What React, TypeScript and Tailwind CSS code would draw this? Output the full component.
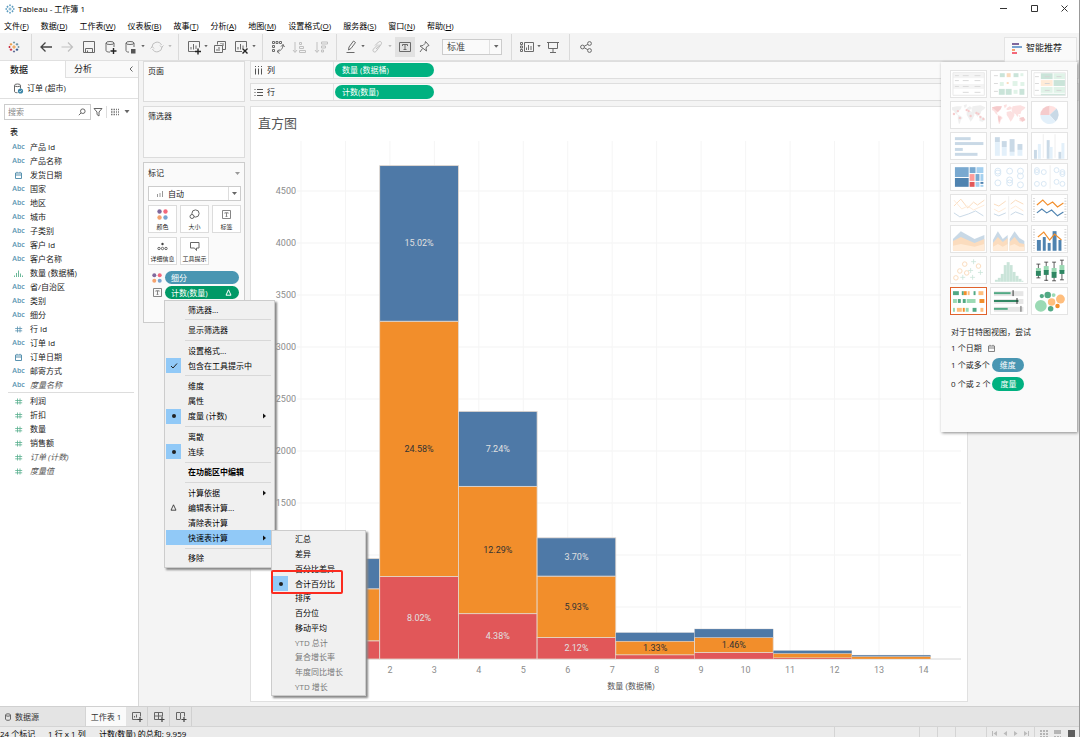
import type { ReactNode } from 'react'
import clsx from 'clsx'

const BLUE = '#4e79a7'
const ORANGE = '#f28e2b'
const RED = '#e15759'

const menus = [
  ['文件', 'F'], ['数据', 'D'], ['工作表', 'W'], ['仪表板', 'B'], ['故事', 'T'], ['分析', 'A'],
  ['地图', 'M'], ['设置格式', 'O'], ['服务器', 'S'], ['窗口', 'N'], ['帮助', 'H'],
]

type FieldKind = 'abc' | 'date' | 'bin' | 'num' | 'measure'

interface Field {
  name: string
  kind: FieldKind
  italic?: boolean
}

const dimensions: Field[] = [
  { name: '产品 Id', kind: 'abc' },
  { name: '产品名称', kind: 'abc' },
  { name: '发货日期', kind: 'date' },
  { name: '国家', kind: 'abc' },
  { name: '地区', kind: 'abc' },
  { name: '城市', kind: 'abc' },
  { name: '子类别', kind: 'abc' },
  { name: '客户 Id', kind: 'abc' },
  { name: '客户名称', kind: 'abc' },
  { name: '数量 (数据桶)', kind: 'bin' },
  { name: '省/自治区', kind: 'abc' },
  { name: '类别', kind: 'abc' },
  { name: '细分', kind: 'abc' },
  { name: '行 Id', kind: 'num' },
  { name: '订单 Id', kind: 'abc' },
  { name: '订单日期', kind: 'date' },
  { name: '邮寄方式', kind: 'abc' },
  { name: '度量名称', kind: 'abc', italic: true },
]

const measures: Field[] = [
  { name: '利润', kind: 'measure' },
  { name: '折扣', kind: 'measure' },
  { name: '数量', kind: 'measure' },
  { name: '销售额', kind: 'measure' },
  { name: '订单 (计数)', kind: 'measure', italic: true },
  { name: '度量值', kind: 'measure', italic: true },
]

interface MenuEntry {
  label: string
  mark?: 'check' | 'dot' | 'delta'
  arrow?: boolean
  bold?: boolean
  active?: boolean
  disabled?: boolean
}

const contextSections: MenuEntry[][] = [
  [{ label: '筛选器...' }],
  [{ label: '显示筛选器' }],
  [{ label: '设置格式...' }, { label: '包含在工具提示中', mark: 'check' }],
  [{ label: '维度' }, { label: '属性' }, { label: '度量 (计数)', mark: 'dot', arrow: true }],
  [{ label: '离散' }, { label: '连续', mark: 'dot' }],
  [{ label: '在功能区中编辑', bold: true }],
  [
    { label: '计算依据', arrow: true },
    { label: '编辑表计算...', mark: 'delta' },
    { label: '清除表计算' },
    { label: '快速表计算', arrow: true, active: true },
  ],
  [{ label: '移除' }],
]

const quickCalcs: MenuEntry[] = [
  { label: '汇总' },
  { label: '差异' },
  { label: '百分比差异' },
  { label: '合计百分比', mark: 'dot' },
  { label: '排序' },
  { label: '百分位' },
  { label: '移动平均' },
  { label: 'YTD 总计', disabled: true },
  { label: '复合增长率', disabled: true },
  { label: '年度同比增长', disabled: true },
  { label: 'YTD 增长', disabled: true },
]

// record counts per bin, stacked from the axis up
const bins = [
  { counts: [175, 500, 290], labels: ['', '', ''] },
  { counts: [793, 2455, 1496], labels: ['8.02%', '24.58%', '15.02%'] },
  { counts: [436, 1224, 721], labels: ['4.38%', '12.29%', '7.24%'] },
  { counts: [206, 591, 368], labels: ['2.12%', '5.93%', '3.70%'] },
  { counts: [40, 132, 82], labels: ['', '1.33%', ''] },
  { counts: [62, 145, 82], labels: ['', '1.46%', ''] },
  { counts: [12, 42, 28], labels: ['', '', ''] },
  { counts: [0, 24, 14], labels: ['', '', ''] },
]

function Icon({ size = 16, children, color = '#666', label }: { size?: number; children: ReactNode; color?: string; label?: string }) {
  return (
    <svg width={size} height={size} viewBox={`0 0 ${size} ${size}`} fill="none" stroke={color} aria-label={label} aria-hidden={!label} className="shrink-0">
      {children}
    </svg>
  )
}

function TableauMark({ size, tinted }: { size: number; tinted?: boolean }) {
  const plus = (x: number, y: number, r: number, c: string) => (
    <path key={`${x}-${y}`} d={`M${x - r} ${y}h${r * 2}M${x} ${y - r}v${r * 2}`} stroke={tinted ? '#4a90b8' : c} />
  )
  return (
    <svg width={size} height={size} viewBox="0 0 16 16" strokeWidth="1.2" aria-hidden="true">
      {plus(8, 8, 2.4, '#eb912c')}
      {plus(4, 4.4, 1.7, '#eb912c')}
      {plus(12, 4.4, 1.7, '#5b879b')}
      {plus(4, 11.6, 1.7, '#c72035')}
      {plus(12, 11.6, 1.7, '#1f447e')}
      {plus(8, 2, 1.4, '#7099a6')}
      {plus(8, 14, 1.4, '#5c6692')}
      {plus(2, 8, 1.4, '#c72035')}
      {plus(14, 8, 1.4, '#7099a6')}
    </svg>
  )
}

function Caret({ faded }: { faded?: boolean }) {
  return (
    <button aria-label="更多" className="flex w-[6px] items-center justify-center">
      <svg width="4" height="3" viewBox="0 0 4 3" aria-hidden="true">
        <path d="M.3 0h3.400L2 2.300z" fill={faded ? '#bbb' : '#666'} />
      </svg>
    </button>
  )
}

function Separator({ tight }: { tight?: boolean }) {
  return <div className={clsx('h-[26px] w-px shrink-0 bg-[#dadada]', tight ? 'mx-[3px]' : 'mx-[5px]')} />
}

function Tool({ label, width = 'w-[21px]', faded, active, children }: { label: string; width?: string; faded?: boolean; active?: boolean; children: ReactNode }) {
  return (
    <button aria-label={label} className={clsx('flex h-5 shrink-0 items-center justify-center', width, active && 'bg-[#e2e2e2]')}>
      <Icon color={faded ? '#c0c0c0' : '#6a6a6a'}>{children}</Icon>
    </button>
  )
}

function Toolbar() {
  return (
    <div className="flex h-7 shrink-0 items-center border-b border-[#e0e0e0] bg-[#f4f4f4]">
      <button aria-label="起始页" className="flex w-7 justify-center">
        <TableauMark size={12} />
      </button>
      <Separator tight />
      <Tool label="撤消"><path d="M3 8h11M7.500 3.500L3 8l4.500 4.500" strokeWidth="1.300" stroke="#444" /></Tool>
      <Tool label="重做" width="w-[22px]" faded><path d="M2.500 8H13M9 3.500L13.500 8 9 12.500" strokeWidth="1.200" /></Tool>
      <Tool label="保存"><path d="M2.500 2.500h11v11h-11zM4.500 13V9.500h7V13M6.500 11.500V13" /></Tool>
      <Tool label="新建数据源">
        <path d="M4 4v7.500c0 1 1.500 1.600 4 1.600M12 4v4" />
        <ellipse cx="8" cy="4" rx="4" ry="1.500" />
        <path d="M11.500 9v6M8.500 12h6" stroke="#222" strokeWidth="1.400" />
      </Tool>
      <Tool label="暂停自动更新" width="w-5">
        <path d="M4 4v7.500c0 1 1 1.600 3 1.600M12 4v4" />
        <ellipse cx="8" cy="4" rx="4" ry="1.500" />
        <path d="M9 10h4.500v4.500H9z" fill="#555" stroke="none" />
      </Tool>
      <Caret />
      <Tool label="运行更新" faded>
        <path d="M3 8a5 5 0 0 1 9.500-2M13 8a5 5 0 0 1-9.500 2M14.500 6.500l-1.800 1.800L11 6.500M1.500 9.500L3.300 7.700 5 9.500" />
      </Tool>
      <Caret faded />
      <Separator />
      <Tool label="新建工作表" width="w-[19px]">
        <path d="M9 12.500H2.500v-10h11v6M5 10.500V8M7.500 10.500V5M10 10V6.500" />
        <path d="M12 9.500v6M9 12.500h6" stroke="#222" strokeWidth="1.400" />
      </Tool>
      <Caret />
      <Tool label="复制工作表">
        <path d="M5.500 5.500v-3h8v8h-3M2.500 6.500h8v7h-8zM5 12v-2M7 12V8M9 5V4M11 7V4" />
      </Tool>
      <Tool label="清除工作表">
        <path d="M9 12.500H2.500v-10h11v6M5 10.500V8M7.500 10.500V5M10 9V6.500" />
        <path d="M9.500 9.500l5 5M14.500 9.500l-5 5" stroke="#222" strokeWidth="1.400" />
      </Tool>
      <Caret />
      <Separator />
      <Tool label="交换行和列" width="w-5">
        <path d="M2.500 2.500h2v2h-2zM6 2.500h2v2H6zM9.500 2.500h2v2h-2zM2.500 6.500h2v2h-2zM2.500 10.500h2v2h-2zM13 5.500c0 4-2 6.500-6 7M9.500 10.500l-2.500 2 2.500 2M11 7.500l2-2 1.500 2.500" />
      </Tool>
      <Tool label="升序排序" width="w-[22px]" faded>
        <path d="M4 3v10M2 11l2 2.500L6 11M8.500 3.500h2v2h-2zM8.500 7.500h4v2h-4zM8.500 11.500h6v2h-6z" />
      </Tool>
      <Tool label="降序排序" faded>
        <path d="M4 3v10M2 11l2 2.500L6 11M8.500 3h6v2h-6zM8.500 7h4v2h-4zM8.500 11h2v2h-2z" />
      </Tool>
      <Separator />
      <Tool label="突出显示" width="w-[18px]">
        <path d="M5.500 11l.5-3 4.500-6 2 1.500L8 9.500 5.500 11zM3.500 13.500h8" />
      </Tool>
      <Caret />
      <Tool label="组成员" faded>
        <path d="M6 6.500l3.500-3.500c2-1.500 4 .5 2.500 2.500L7 12.500c-2 1.500-4-.5-2.500-2.500L9 5.500M7 10l4-4.500" />
      </Tool>
      <Caret faded />
      <div className="w-[2px]" />
      <Tool label="显示标记标签" width="w-5" active>
        <path d="M2.500 3.500h11v9h-11z" />
        <path d="M5.500 7V5.500h5V7M8 5.500v5M6.500 10.500h3" />
      </Tool>
      <Tool label="固定轴" width="w-[18px]">
        <path d="M9.500 2.500l3.500 4-1.500.5-1.500 2 .5 3L4 7l3-.5 2-2zM6.500 9.500L4 13" />
      </Tool>
      <div className="relative mr-1 ml-[9px] h-4 w-[60px] shrink-0 border border-[#ccc] bg-[#fafafa]">
        <select aria-label="适合" className="block h-full w-full appearance-none bg-transparent pl-1 text-[9px] leading-[14px] text-[#444]">
          <option>标准</option>
        </select>
        <span className="pointer-events-none absolute inset-y-0 right-0 flex w-3 items-center justify-center border-l border-[#e0e0e0]">
          <svg width="6" height="4" viewBox="0 0 6 4" aria-hidden="true"><path d="M1 0h4.500L3.200 2.800z" fill="#666" /></svg>
        </span>
      </div>
      <Separator />
      <Tool label="显示/隐藏卡" width="w-[19px]">
        <path d="M1.500 3.500h2v2h-2zM1.500 7h2v2h-2zM1.500 10.500h2v2h-2zM5.500 3.500h9v9h-9zM7.500 11V8.500M9.500 11V6M12 11V7" />
      </Tool>
      <Caret />
      <Tool label="演示模式" width="w-[22px]">
        <path d="M2 3.500h12M3.500 3.500v6h9v-6M8 9.500V13M5 13.500h6" />
      </Tool>
      <Separator />
      <Tool label="共享">
        <circle cx="4.500" cy="8" r="1.900" />
        <circle cx="11.500" cy="4.500" r="1.900" />
        <circle cx="11.500" cy="11.500" r="1.900" />
        <path d="M6.300 7.200l3.500-1.800M6.300 8.800l3.500 1.900" />
      </Tool>
    </div>
  )
}

function FieldIcon({ kind }: { kind: FieldKind }) {
  if (kind === 'abc') return <span className="text-[7px] font-semibold text-[#5a93b0]">Abc</span>
  if (kind === 'date') {
    return <Icon size={9} color="#5a93b0"><path d="M1.500 2h6v5.500h-6zM1.500 4h6M3 .8v1.200M6 .8v1.200" /></Icon>
  }
  if (kind === 'bin') {
    return <Icon size={9} color="#6cb899"><path d="M.5 8V6.500M2.500 8V4M4.500 8V1.500M6.500 8V4.500M8.500 8V6.500" /></Icon>
  }
  return <Icon size={9} color={kind === 'num' ? '#5a93b0' : '#5bb08f'}><path d="M3.500 1.500v6M6 1.500v6M1.200 3.500h7M1.200 5.800h7" strokeWidth=".8" /></Icon>
}

function FieldList({ fields }: { fields: Field[] }) {
  return (
    <ul>
      {fields.map((f) => (
        <li key={f.name} className="flex h-[14px] items-center">
          <span className="flex w-[18px] justify-center pr-[5px]"><FieldIcon kind={f.kind} /></span>
          <span className={clsx('whitespace-nowrap', f.italic && 'text-[#555] italic')}>{f.name}</span>
        </li>
      ))}
    </ul>
  )
}

function DataPane() {
  return (
    <aside className="flex w-[139px] shrink-0 flex-col border-r border-[#d8d8d8] bg-white">
      <div className="flex h-[17px] shrink-0 text-[9px]">
        <button className="w-[65px] pl-[10px] text-left font-medium">数据</button>
        <button className="flex flex-1 items-center justify-between border-b border-l border-[#e0e0e0] bg-[#fafafa] pr-1 pl-2">
          <span>分析</span>
          <Icon size={6}><path d="M4.500 0.500L2 3l2.500 2.500" /></Icon>
        </button>
      </div>
      <div className="flex h-[21px] shrink-0 items-center gap-[3px] border-b border-[#e0e0e0] pl-[13px]">
        <Icon size={11}>
          <path d="M1.500 2.500v6c0 .8 1 1.200 3 1.200M7.500 2.500v3" />
          <ellipse cx="4.500" cy="2.300" rx="3" ry="1.300" />
          <circle cx="7.500" cy="8" r="2.600" fill="#3b86a8" stroke="none" />
          <path d="M6.300 8l.9.900 1.500-1.700" stroke="#fff" strokeWidth=".7" />
        </Icon>
        <span>订单 (超市)</span>
      </div>
      <div className="mt-[5px] flex h-4 shrink-0 items-center pl-1">
        <label className="flex h-4 w-[87px] items-center border border-[#ccc] pr-1 pl-[3px]">
          <input type="search" aria-label="搜索" placeholder="搜索" className="w-full min-w-0 bg-transparent outline-none placeholder:text-[#888]" />
          <Icon size={8}><circle cx="4.800" cy="3.200" r="2.300" /><path d="M3 5L.8 7.200" /></Icon>
        </label>
        <button aria-label="筛选" className="ml-[2px]"><Icon size={10}><path d="M1 1.500h8L6 5v4L4 7.500V5z" /></Icon></button>
        <span className="mx-[3px] h-3 w-px bg-[#ddd]" />
        <button aria-label="查看方式" className="flex items-center gap-1">
          <Icon size={10} color="#777"><path d="M1 2.500h1.500M3.500 2.500h1.500M6 2.500h1M8 2.500h1M1 5h1.500M3.500 5h1.500M6 5h1M8 5h1M1 7.500h1.500M3.500 7.500h1.500M6 7.500h1M8 7.500h1" strokeWidth="1.400" /></Icon>
          <svg width="6" height="4" viewBox="0 0 6 4" aria-hidden="true"><path d="M0.500 0h5L3 3.200z" fill="#666" /></svg>
        </button>
      </div>
      <h2 className="mt-[5px] h-[14px] pl-[10px] leading-[14px] font-medium">表</h2>
      <div className="mt-px pr-1 pl-3">
        <FieldList fields={dimensions} />
        <div className="-ml-1 mb-px h-px bg-[#ddd]" />
        <FieldList fields={measures} />
      </div>
    </aside>
  )
}

function ColorDots({ size }: { size: number }) {
  return (
    <svg width={size} height={size} viewBox="0 0 10 10" aria-hidden="true">
      <circle cx="2.300" cy="2.300" r="2" fill="#80689c" />
      <circle cx="7.700" cy="2.300" r="2" fill="#f4687a" />
      <circle cx="2.300" cy="7.700" r="2" fill="#f5a26d" />
      <circle cx="7.700" cy="7.700" r="2" fill="#79a3d0" />
    </svg>
  )
}

function LabelBox() {
  return <Icon size={11} color="#777"><path d="M1.500 1.500h8v8h-8zM3.800 4.500V3.800h3.400v.7M5.500 3.800v3.600M4.600 7.400h1.800" strokeWidth=".9" /></Icon>
}

function MarkButton({ label, children }: { label: string; children: ReactNode }) {
  return (
    <button className="flex h-7 w-[29px] flex-col items-center justify-between border border-[#dcdcdc] bg-white pt-[3px]">
      {children}
      <span className="text-[6px] leading-[9px] whitespace-nowrap">{label}</span>
    </button>
  )
}

function CardColumn() {
  return (
    <section className="flex w-[111px] shrink-0 flex-col gap-1 px-1 pr-[5px]">
      <div className="h-[41px] border border-[#dcdcdc] bg-[#fafafa] px-1 pt-[3px] leading-[12px]">页面</div>
      <div className="h-[52px] border border-[#dcdcdc] bg-[#fafafa] px-1 pt-[3px] leading-[12px]">筛选器</div>
      <div className="h-[161px] border border-[#ccc] bg-[#fafafa] pl-1">
        <div className="flex h-[20px] items-center justify-between pr-1">
          <h2>标记</h2>
          <svg width="5" height="3" viewBox="0 0 5 3" aria-hidden="true"><path d="M0 0h5L2.500 3z" fill="#999" /></svg>
        </div>
        <div className="relative mt-[3px] h-[15px] w-[93px] border border-[#ccc] bg-white">
          <span className="absolute top-[3px] left-[7px]"><Icon size={8} color="#999"><path d="M1.500 7V4M4 7V3M6.500 7V1" /></Icon></span>
          <select aria-label="标记类型" className="block h-full w-full appearance-none bg-transparent pl-[19px] text-[8px] leading-[13px]">
            <option>自动</option>
          </select>
          <span className="pointer-events-none absolute inset-y-0 right-0 flex w-3 items-center justify-center border-l border-[#ddd]">
            <svg width="5" height="3" viewBox="0 0 5 3" aria-hidden="true"><path d="M0 0h5L2.500 3z" fill="#666" /></svg>
          </span>
        </div>
        <div className="mt-1 flex w-[93px] flex-wrap gap-x-[3px] gap-y-1">
          <MarkButton label="颜色"><ColorDots size={11} /></MarkButton>
          <MarkButton label="大小"><Icon size={11}><circle cx="6.500" cy="4.500" r="3.600" /><circle cx="3" cy="7.500" r="2" fill="#fff" /></Icon></MarkButton>
          <MarkButton label="标签"><LabelBox /></MarkButton>
          <MarkButton label="详细信息">
            <Icon size={11}><circle cx="5.500" cy="3" r="1.200" fill="#444" stroke="none" /><circle cx="2" cy="7.500" r="1.200" /><circle cx="5.500" cy="7.500" r="1.200" /><circle cx="9" cy="7.500" r="1.200" /></Icon>
          </MarkButton>
          <MarkButton label="工具提示"><Icon size={11}><path d="M1.500 1.500h8.500v5.500H7.500v2.500L5.500 7h-4z" /></Icon></MarkButton>
        </div>
        <div className="mt-[6px] flex flex-col gap-[2px] pl-1 text-white">
          <div className="flex items-center gap-[3px]">
            <ColorDots size={10} />
            <button className="h-[13px] w-[74px] rounded-full bg-[#4996b2] pl-[6px] text-left leading-[13px]">细分</button>
          </div>
          <div className="flex items-center gap-[2px]">
            <LabelBox />
            <button className="flex h-[13px] w-[74px] items-center justify-between rounded-full bg-[#009966] pr-[7px] pl-[6px]">
              <span>计数(数量)</span>
              <Icon size={7} color="#fff"><path d="M3.500 .8l2.500 5.400H1z" /></Icon>
            </button>
          </div>
        </div>
      </div>
    </section>
  )
}

function Shelf({ name, pill, rows }: { name: string; pill: string; rows?: boolean }) {
  return (
    <div className="flex h-[18px] items-center border border-[#dedede] bg-[#fafafa]">
      <div className="flex h-full w-[83px] items-center gap-1 border-r border-[#e4e4e4] pl-[3px]">
        <Icon size={9} color="#555">
          {rows ? <path d="M.5 1.500h1M3 1.500h6M.5 4.500h1M3 4.500h6M.5 7.500h1M3 7.500h6" /> : <path d="M1.500 0v1M1.500 2.500v6M4.500 0v1M4.500 2.500v6M7.500 0v1M7.500 2.500v6" />}
        </Icon>
        <span>{name}</span>
      </div>
      <button className="ml-px h-[14px] w-[99px] rounded-full bg-[#00b180] pl-[7px] text-left leading-[14px] text-white">{pill}</button>
    </div>
  )
}

const ORIGIN_X = 50
const BASELINE = 520
const UNIT = 44.46
const BIN_WIDTH = 78.7
const PX_PER_RECORD = 0.104

function Histogram() {
  const ticks = Array.from({ length: 15 }, (_, i) => i)
  const levels = Array.from({ length: 10 }, (_, i) => i * 500)
  return (
    <svg viewBox="0 0 716 562" className="block w-full font-[Roboto,'Noto_Sans_CJK_SC',sans-serif] text-[9px]" role="img" aria-label="直方图">
      {levels.map((v) => (
        <g key={v}>
          <line x1={ORIGIN_X - 4} x2="710" y1={BASELINE - v * PX_PER_RECORD} y2={BASELINE - v * PX_PER_RECORD} stroke={v ? '#f3f3f3' : '#d6d6d6'} />
          <text x={ORIGIN_X - 5} y={BASELINE - v * PX_PER_RECORD + 3} textAnchor="end" fill="#8c8c8c">{v}</text>
        </g>
      ))}
      {ticks.map((t) => (
        <g key={t}>
          <line x1={ORIGIN_X + t * UNIT} x2={ORIGIN_X + t * UNIT} y1="2" y2={BASELINE} stroke="#f5f5f5" />
          {t > 0 && <text x={ORIGIN_X + t * UNIT} y={BASELINE + 14} textAnchor="middle" fill="#8c8c8c">{t}</text>}
        </g>
      ))}
      {bins.map((bin, i) => {
        const x = ORIGIN_X + i * BIN_WIDTH
        let below = 0
        return bin.counts.map((count, k) => {
          below += count
          const y = BASELINE - below * PX_PER_RECORD
          const h = count * PX_PER_RECORD
          return (
            <g key={`${i}-${k}`}>
              <rect x={x} y={y} width={BIN_WIDTH} height={h} fill={[RED, ORANGE, BLUE][k]} stroke="#e4d9cf" strokeWidth={count > 100 ? 0.8 : 0.3} />
              {bin.labels[k] && (
                <text x={x + BIN_WIDTH / 2} y={y + h / 2 + 3} textAnchor="middle" fill={k === 1 ? '#333' : '#e0e0e0'}>{bin.labels[k]}</text>
              )}
            </g>
          )
        })
      })}
      <text x="380" y={BASELINE + 30} textAnchor="middle" fill="#555" className="text-[8px]">数量 (数据桶)</text>
    </svg>
  )
}

function Thumb({ label, faded, selected, children }: { label: string; faded?: boolean; selected?: boolean; children: ReactNode }) {
  return (
    <button aria-label={label} className={clsx('h-7 border bg-white', selected ? 'border-[#e0622c]' : 'border-[#e4e4e4]')}>
      <svg viewBox="0 0 36 26" className={clsx('h-full w-full', faded && 'opacity-30')} fill="none" aria-hidden="true">{children}</svg>
    </button>
  )
}

// [x, y, w, h, colour]
type Block = [number, number, number, number, string]

function Blocks({ items }: { items: Block[] }) {
  return <>{items.map(([x, y, w, h, c], i) => <rect key={i} x={x} y={y} width={w} height={h} fill={c} />)}</>
}

function Rings({ items, r = 3, color = '#7fb2dd' }: { items: number[][]; r?: number; color?: string }) {
  return <>{items.map(([x, y], i) => <circle key={i} cx={x} cy={y} r={r} stroke={color} strokeWidth="1" />)}</>
}

const G = '#52a984'
const LG = '#9bdab4'
const O = '#f28e2b'
const LO = '#ffbe7d'
const DB = '#4f83b0'
const LB = '#a5d0ef'

function WorldMap({ fill }: { fill: string }) {
  return (
    <path
      fill={fill}
      d="M1 5l5-1 5 0-1 3-2 2-2 2 1 2-2-1-2-3-2-1zM7 13l3 1 2 2-2 2-1 4-1 0-1-5zM13 3l3-1 0 2-2 2zM16 6l3-2 2 1 0 2-3 1-2 0zM16 10l4-1 3 2 1 2-2 4-2 3-2-4-2-3zM22 4l8-1 5 2-1 2-3 2-1 3-2 0-1 3-2-3-3-1-1-3zM29 16l4-1 2 3-3 2-3-1zM28 13l2 1-1 1z"
    />
  )
}

function ShowMe() {
  return (
    <div className="absolute top-[-24px] right-[2px] z-10 flex w-[136px] flex-col items-end">
      <button className="flex h-[25px] w-[73px] items-center gap-[3px] border border-b-0 border-[#e4e4e4] bg-[#fafafa] pb-1 pl-[6px] text-[9px]">
        <Icon size={12}>
          <path d="M1 2h7" stroke="#80689c" strokeWidth="2" />
          <path d="M1 5h10" stroke="#79a3d0" strokeWidth="2" />
          <path d="M1 8h3" stroke="#f5a26d" strokeWidth="2" />
          <path d="M1 11h5" stroke="#f4687a" strokeWidth="2" />
        </Icon>
        智能推荐
      </button>
      <div className="h-[370px] w-full bg-[#fafafa] px-[9px] pt-2 shadow-[1px_1px_3px_#888]">
        <div className="grid grid-cols-3 gap-[3px]">
          <Thumb label="文本表" faded>
            <Blocks items={[[2, 2, 32, 5, '#ddd'], [2, 13, 32, 5, '#ddd'], [4, 4, 4, 1, '#888'], [12, 4, 6, 1, '#888'], [24, 4, 6, 1, '#888'], [4, 9, 4, 1, '#888'], [12, 9, 6, 1, '#888'], [24, 9, 6, 1, '#888'], [4, 15, 4, 1, '#888'], [12, 15, 6, 1, '#888'], [24, 15, 6, 1, '#888'], [12, 21, 6, 1, '#888'], [24, 21, 6, 1, '#888']]} />
            <path d="M2 1.500h32v23H2z" stroke="#bbb" />
          </Thumb>
          <Thumb label="热图" faded>
            <Blocks items={[[3, 4, 4, 1, '#888'], [3, 12, 4, 1, '#888'], [3, 20, 4, 1, '#888'], [9, 2, 5, 4, G], [16, 2, 4, 4, O], [23, 2, 5, 4, G], [30, 2, 3, 3, LG], [9, 11, 4, 4, LG], [16, 11, 2, 2, O], [22, 10, 5, 5, LG], [30, 11, 4, 4, LG], [8, 18, 6, 6, G], [15, 18, 6, 6, G], [23, 19, 4, 4, LG], [29, 18, 5, 6, G]]} />
          </Thumb>
          <Thumb label="突出显示表" faded>
            <Blocks items={[[3, 5, 4, 1, '#888'], [3, 12, 4, 1, '#888'], [3, 19, 4, 1, '#888'], [9, 2, 12, 6, G], [22, 2, 12, 6, LG], [9, 9, 12, 6, LO], [22, 9, 12, 6, G], [9, 16, 12, 6, LG], [22, 16, 12, 6, LG], [9, 23, 25, 2, G], [13, 5, 5, 1, '#777'], [25, 5, 5, 1, '#777'], [13, 12, 5, 1, '#777'], [13, 19, 5, 1, '#777'], [25, 19, 5, 1, '#777']]} />
            <path d="M2 1.500h32v23H2z" stroke="#bbb" />
          </Thumb>
          <Thumb label="符号地图" faded>
            <WorldMap fill="#ccc" />
            {[[3, 12], [7, 9], [16, 8], [18, 9], [26, 11], [28, 12], [33, 17], [30, 15], [9, 16], [20, 14]].map(([x, y], i) => <circle key={i} cx={x} cy={y} r="1.200" fill={RED} />)}
          </Thumb>
          <Thumb label="填充地图" faded>
            <WorldMap fill="#f79a9a" />
            <path d="M1 5l5-1 5 0-1 3-3 3-4-3zM7 14l3 1-1 5-1 0zM29 16l4-1 2 3-3 2z" fill={RED} />
          </Thumb>
          <Thumb label="饼图" faded>
            <path d="M18 13V3.500A9.500 9.500 0 0 0 8.500 13z" fill={RED} />
            <path d="M18 13V3.500a9.500 9.500 0 0 1 7 3z" fill="#ff9d9a" />
            <path d="M18 13l7-6.500a9.500 9.500 0 0 1-1 13z" fill={DB} />
            <path d="M18 13H8.500a9.500 9.500 0 0 0 15.500 7z" fill={LB} />
          </Thumb>
          <Thumb label="水平条" faded>
            <Blocks items={[[4, 4, 16, 3, DB], [4, 9, 29, 3, DB], [4, 15, 8, 3, DB], [4, 20, 23, 3, DB]]} />
          </Thumb>
          <Thumb label="堆叠条" faded>
            <Blocks items={[[4, 4, 5, 5, DB], [4, 9, 5, 14, LB], [11, 8, 5, 6, DB], [11, 14, 5, 9, LB], [19, 6, 5, 13, DB], [19, 19, 5, 4, LB], [27, 11, 5, 6, DB], [27, 17, 5, 6, LB]]} />
          </Thumb>
          <Thumb label="并排条" faded>
            <Blocks items={[[2, 17, 3, 9, DB], [6, 11, 3, 15, LB], [15, 7, 3, 19, DB], [18, 14, 3, 12, LB], [27, 19, 3, 7, DB], [30, 10, 3, 16, LB]]} />
            <path d="M11.500 1v24M23.500 1v24" stroke="#ccc" />
          </Thumb>
          <Thumb label="树状图">
            <Blocks items={[[4, 3, 14, 10, '#79a9d0'], [4, 14, 14, 9, DB], [19, 3, 6, 6, '#79a9d0'], [26, 3, 7, 6, LB], [19, 10, 5, 7, '#ff9d9a'], [19, 18, 5, 5, RED], [25, 10, 4, 7, '#79a9d0'], [30, 10, 3, 7, LB], [25, 18, 4, 5, LB], [30, 18, 3, 2, DB], [30, 21, 3, 2, LB]]} />
          </Thumb>
          <Thumb label="圆视图" faded>
            <Rings items={[[7, 7], [7, 9], [7, 19], [19, 7], [19, 16], [19, 19], [30, 7], [30, 12], [30, 21]]} />
          </Thumb>
          <Thumb label="并排圆" faded>
            <Rings r={2.5} items={[[5, 6], [5, 8], [5, 20], [12, 8], [12, 20], [25, 6], [31, 8], [31, 10], [25, 18], [31, 20]]} />
            <path d="M18.500 1v24" stroke="#ccc" />
          </Thumb>
          <Thumb label="连续线" faded>
            <path d="M3 11l7-7 7 9 6-6 4 3 7-5" stroke={O} />
            <path d="M3 5l8 9 6-3 6 4 11-5" stroke={LO} />
            <path d="M3 18l6 4 9-3 7-3 8 5" stroke={DB} />
          </Thumb>
          <Thumb label="离散线" faded>
            <path d="M3 9l5 2 7-5M20 9l5-4 8 4" stroke={O} />
            <path d="M3 14l5 3 7-4M20 14l5-3 8 5" stroke={LO} />
            <path d="M3 19l5 2 7-3M20 20l5-3 8 3" stroke={DB} />
            <path d="M18 1v24" stroke="#ccc" />
          </Thumb>
          <Thumb label="双线">
            <path d="M5 10l6-5 5 5 5-3 5 5 6-4" stroke={O} strokeWidth="1.200" />
            <path d="M5 18l5-4 5 4 5-3 6 6 6-4" stroke={DB} strokeWidth="1.200" />
            <path d="M2 3v22M34 3v22" stroke="#bbb" strokeWidth="2" strokeDasharray=".7 2" />
          </Thumb>
          <Thumb label="连续面积" faded>
            <path d="M2 13l8-8 14 8 10-4v16H2z" fill={DB} />
            <path d="M2 15l8-4 14 6 10-4v12H2z" fill={O} />
            <path d="M2 20l8-2 14 3 10-3v7H2z" fill={LO} />
          </Thumb>
          <Thumb label="离散面积" faded>
            <path d="M2 14l5-9 5 8 5-4v16H2zM19 13l5-8 5 7 5 3v10H19z" fill={DB} />
            <path d="M2 17l5-6 5 5 5-4v13H2zM19 16l5-5 5 6 5 1v7H19z" fill={O} />
            <path d="M2 21l5-3 5 3 5-3v7H2zM19 20l5-2 5 3 5 0v4H19z" fill={LO} />
          </Thumb>
          <Thumb label="双组合">
            <Blocks items={[[5, 14, 4, 11, DB], [11, 11, 3, 14, DB], [16, 17, 3, 8, DB], [21, 5, 4, 20, DB], [27, 14, 3, 11, DB]]} />
            <path d="M6 11l6-5 6 8 5-6 7 6" stroke={O} strokeWidth="1.200" />
            <path d="M2 3v22M34 3v22" stroke="#bbb" strokeWidth="2" strokeDasharray=".7 2" />
          </Thumb>
          <Thumb label="散点图" faded>
            <Rings r={2.3} color={O} items={[[5, 21], [9, 14], [14, 7], [16, 16], [28, 9]]} />
            <path d="M23 2v5M20.500 4.500h5M20 11v5M17.500 13.500h5M30 13v5M27.500 15.500h5M22 18v5M19.500 20.500h5M12 18v5M9.500 20.500h5" stroke={G} strokeWidth=".8" />
          </Thumb>
          <Thumb label="直方图" faded>
            <Blocks items={[[4, 23, 3, 2, G], [7, 21, 3, 4, G], [10, 17, 3, 8, G], [13, 8, 3, 17, G], [16, 5, 3, 20, G], [19, 8, 3, 17, G], [22, 15, 3, 10, G], [25, 19, 3, 6, G], [28, 22, 3, 3, G], [31, 24, 2, 1, G]]} />
          </Thumb>
          <Thumb label="盒须图">
            <path d="M6.500 7v14M14.500 5v19M22.500 5v19M30.500 3v20M4.500 7h4M12.500 5h4M20.500 5h4M28.500 3h4M4.500 21h4M12.500 23.500h4M20.500 24h4M28.500 23h4" stroke="#333" strokeWidth=".8" />
            <Blocks items={[[4, 11, 5, 4, LG], [4, 14, 5, 5, '#2f8763'], [12, 9, 5, 5, LG], [12, 13, 5, 5, '#2f8763'], [20, 11, 5, 5, LG], [20, 15, 5, 6, '#2f8763'], [28, 8, 5, 6, LG], [28, 13, 5, 4, '#2f8763']]} />
          </Thumb>
          <Thumb label="甘特图" selected>
            <Blocks items={[[2, 3, 6, 4, G], [11, 3, 2, 4, G], [13, 3, 3, 4, O], [17, 3, 2, 4, LO], [23, 3, 2, 4, G], [28, 3, 5, 4, LO], [2, 11, 4, 4, LG], [7, 11, 3, 4, G], [12, 11, 3, 4, G], [16, 11, 9, 4, LG], [29, 11, 5, 4, O], [2, 20, 2, 4, LG], [6, 20, 5, 4, LO], [12, 20, 2, 4, O], [15, 20, 3, 4, LG], [22, 20, 4, 4, G], [30, 20, 3, 4, LO]]} />
          </Thumb>
          <Thumb label="靶心图">
            <Blocks items={[[3, 3, 30, 5, '#e6e6e6'], [3, 11, 30, 5, '#e6e6e6'], [3, 19, 30, 5, '#e6e6e6'], [3, 4, 17, 2, G], [3, 12, 25, 2, '#2f8763'], [3, 20, 14, 2, G], [22, 2, 1, 6, '#333'], [26, 10, 1, 6, '#333'], [30, 18, 1, 6, '#666']]} />
          </Thumb>
          <Thumb label="填充气泡图">
            <circle cx="9" cy="18" r="6" fill={LG} />
            <circle cx="16" cy="7" r="3.300" fill={G} />
            <circle cx="10" cy="8" r="2.200" fill={G} />
            <circle cx="20" cy="14" r="3.800" fill={LO} />
            <circle cx="29" cy="11" r="4.500" fill={LO} />
            <circle cx="22" cy="7" r="2" fill={LG} />
            <circle cx="19" cy="21" r="2.800" fill={G} />
            <circle cx="26" cy="18" r="2.300" fill={O} />
          </Thumb>
        </div>
        <div className="mt-[9px] ml-px flex flex-col whitespace-nowrap">
          <p className="h-4 leading-4">对于甘特图视图，尝试</p>
          <p className="flex h-4 items-center gap-[5px]">1 个日期 <CalendarIcon /></p>
          <p className="flex h-[17px] items-center gap-[2px]">1 个或多个 <span className="h-[14px] w-8 rounded-full bg-[#4996b2] text-center leading-[14px] text-white">维度</span></p>
          <p className="mt-[2px] flex h-[17px] items-center gap-[2px]">0 个或 2 个 <span className="h-[14px] w-8 rounded-full bg-[#00b180] text-center leading-[14px] text-white">度量</span></p>
        </div>
      </div>
    </div>
  )
}

function CalendarIcon() {
  return <Icon size={9} color="#666"><path d="M1.500 2h6v5.500h-6zM1.500 4h6M3 .8v1.200M6 .8v1.200" strokeWidth=".8" /></Icon>
}

function MenuRow({ entry, height }: { entry: MenuEntry; height: string }) {
  return (
    <button
      role="menuitem"
      disabled={entry.disabled}
      className={clsx(
        'flex w-full items-center text-left whitespace-nowrap',
        height,
        entry.active && 'bg-[#91c9f7]',
        entry.bold && 'font-bold',
        entry.disabled && 'text-[#777]',
      )}
    >
      <span className="flex w-[22px] shrink-0 self-stretch">
        <span className={clsx('flex w-[15px] items-center justify-center', (entry.mark === 'check' || entry.mark === 'dot') && 'bg-[#91c9f7]')}>
          {entry.mark === 'check' && <Icon size={8} color="#222"><path d="M1 4l2 2 4-4.500" /></Icon>}
          {entry.mark === 'dot' && <Icon size={6}><circle cx="3" cy="3" r="2" fill="#222" stroke="none" /></Icon>}
          {entry.mark === 'delta' && <Icon size={7} color="#222"><path d="M3.500 .8l2.500 5.400H1z" strokeWidth=".8" /></Icon>}
        </span>
      </span>
      <span className="flex-1">{entry.label}</span>
      {entry.arrow && (
        <svg width="4" height="6" viewBox="0 0 4 6" className="mr-[6px]" aria-hidden="true"><path d="M0 .5l3 2.500L0 5.500z" fill="#111" /></svg>
      )}
    </button>
  )
}

function ContextMenu() {
  return (
    <div role="menu" className="absolute top-[239px] left-[164px] z-20 flex h-[268px] w-[111px] flex-col justify-between border border-[#ccc] bg-[#f0f0f0] px-px py-px text-black shadow-[2px_2px_2px_#888]">
      {contextSections.map((section, i) => (
        <div key={i} className="contents">
          {i > 0 && <hr className="mr-[2px] ml-[19px] border-[#d8d8d8]" />}
          <div>
            {section.map((entry) => <MenuRow key={entry.label} entry={entry} height="h-[15px]" />)}
          </div>
        </div>
      ))}
    </div>
  )
}

function QuickCalcMenu() {
  return (
    <div role="menu" className="absolute top-[469px] left-[271px] z-30 flex h-[166px] w-[95px] flex-col border border-[#ccc] bg-[#f0f0f0] px-px py-px text-black shadow-[2px_2px_2px_#888]">
      {quickCalcs.map((entry) => <MenuRow key={entry.label} entry={entry} height="flex-1" />)}
      <div className="pointer-events-none absolute top-[39px] -left-px h-6 w-[72px] rounded-[2px] border-2 border-[#fb2b1f]" />
    </div>
  )
}

function SheetTabs() {
  const extras = [
    ['新建工作表', 'M7 8.500H1.500v-7h8v4M3.500 6.500V5M5.500 6.500V3.500'],
    ['新建仪表板', 'M7 8.500H1.500v-7h8v4M1.500 5h8M5.500 1.500v7'],
    ['新建故事', 'M6 8.500L5.500 9l-.5-.500H1.500v-7H5l.5.500.5-.500h3.500v4M5.500 2v6'],
  ]
  return (
    <nav className="flex h-5 shrink-0 border-t border-[#d0d0d0] bg-[#e4e4e4] text-[#333]">
      <button className="flex w-[86px] items-center gap-[3px] border-r border-[#d4d4d4] pl-1">
        <Icon size={8}><path d="M1.500 2v4c0 .8 1 1.300 2.500 1.300S6.500 6.800 6.500 6V2" /><ellipse cx="4" cy="2" rx="2.500" ry="1.200" /></Icon>
        数据源
      </button>
      <button className="w-10 bg-[#fafafa] whitespace-nowrap">工作表 1</button>
      {extras.map(([label, d]) => (
        <button key={label} aria-label={label} className="flex w-[22px] items-center justify-center border-r border-[#d0d0d0]">
          <Icon size={12}><path d={d} /><path d="M9 6v5M6.500 8.500h5" strokeWidth="1.200" stroke="#444" /></Icon>
        </button>
      ))}
    </nav>
  )
}

function StatusBar() {
  return (
    <footer className="flex h-[11px] shrink-0 items-start overflow-hidden border-t border-[#d4d4d4] bg-[#ebebeb] whitespace-nowrap text-black">
      <span className="w-12 leading-[13px]">24 个标记</span>
      <span className="w-[51px] leading-[13px]">1 行 x 1 列</span>
      <span className="flex-1 leading-[13px]">计数(数量) 的总和: 9,959</span>
      <span className="h-full w-[85px] border-l border-[#d4d4d4]" />
      <span className="h-full w-[18px] border-l border-[#d4d4d4]" />
      <span className="h-full w-[18px] border-l border-[#d4d4d4]" />
      <span className="h-full w-[31px] border-l border-[#d4d4d4]" />
      <span className="h-full w-12 border-l border-[#d4d4d4]">
        <svg width="46" height="11" viewBox="0 0 46 11" fill="#bbb" aria-hidden="true">
          <path d="M5 4h1v5H5zM10 4v5L6.500 6.500zM20 4v5l-3.500-2.500zM27 4v5l3.500-2.500zM37 4v5l3.500-2.500zM41 4h1v5h-1z" />
        </svg>
      </span>
      <span className="h-full w-[45px] border-l border-[#d4d4d4]">
        <svg width="44" height="11" viewBox="0 0 44 11" fill="#b5b5b5" aria-hidden="true">
          <path d="M5 3h2v2H5zM8 3h2v2H8zM11 3h2v2h-2zM5 6h2v2H5zM8 6h2v2H8zM11 6h2v2h-2zM5 9h2v2H5zM8 9h2v2H8zM11 9h2v2h-2zM19 3h7v4h-7zM19 9h2v2h-2zM22 9h2v2h-2zM25 9h1v2h-1z" />
          <path d="M33 3h7v8h-7z" fill="#5e5e5e" />
        </svg>
      </span>
    </footer>
  )
}

export default function App() {
  return (
    <div className="flex h-screen flex-col overflow-hidden border-r border-[#999] bg-[#f4f4f4] font-['Open_Sans','Noto_Sans_CJK_SC',sans-serif] text-[8px] leading-[12px] text-[#222]">
      <header className="shrink-0 bg-white text-black">
        <div className="flex h-[17px] items-center pl-[5px]">
          <TableauMark size={10} tinted />
          <h1 className="ml-[3px] flex-1">Tableau - 工作簿 1</h1>
          <div className="flex w-[80px] justify-between pr-[10px]">
            <button aria-label="最小化"><Icon size={9} color="#333"><path d="M1 4.500h7" /></Icon></button>
            <button aria-label="最大化"><Icon size={9} color="#333"><path d="M1.500 1.500h6v6h-6z" /></Icon></button>
            <button aria-label="关闭"><Icon size={9} color="#333"><path d="M1.500 1.500l6 6M7.500 1.500l-6 6" /></Icon></button>
          </div>
        </div>
        <nav className="flex h-4 items-center gap-3 pt-[2px] pl-1 whitespace-nowrap">
          {menus.map(([name, key]) => (
            <button key={key}>{name}(<u>{key}</u>)</button>
          ))}
        </nav>
      </header>
      <Toolbar />
      <div className="relative flex min-h-0 flex-1">
        <DataPane />
        <CardColumn />
        <main className="flex min-w-0 flex-1 flex-col">
          <div className="flex flex-col gap-1">
            <Shelf name="列" pill="数量 (数据桶)" />
            <Shelf name="行" pill="计数(数量)" rows />
          </div>
          <div className="mt-[5px] mr-[111px] mb-1 min-h-0 flex-1 overflow-hidden border border-[#e0e0e0] bg-white">
            <h2 className="h-8 pl-[7px] text-[13px] leading-8 text-[#555]">直方图</h2>
            <Histogram />
          </div>
        </main>
        <ShowMe />
        <ContextMenu />
        <QuickCalcMenu />
      </div>
      <SheetTabs />
      <StatusBar />
    </div>
  )
}
